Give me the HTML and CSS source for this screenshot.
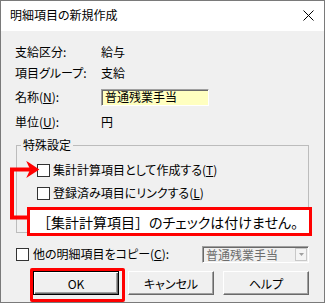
FILE: index.html
```html
<!DOCTYPE html>
<html lang="ja">
<head>
  <meta charset="UTF-8">
  <title>明細項目の新規作成</title>
  <link rel="stylesheet" href="styles.css">
</head>
<body>
  <div class="window">
    <div class="titlebar">
      <span class="title">明細項目の新規作成</span>
      <svg class="close" width="11" height="11" viewBox="0 0 11 11">
        <path d="M0.5 0.5 L10.5 10.5 M10.5 0.5 L0.5 10.5" stroke="#000" stroke-width="1" fill="none"/>
      </svg>
    </div>

    <div class="content">
      <!-- info rows -->
      <div class="info">
        <span>支給区分:</span><span>給与</span>
        <span>項目グループ:</span><span>支給</span>
        <span>名称(<u>N</u>):</span><span class="field">普通残業手当</span>
        <span>単位(<u>U</u>):</span><span>円</span>
      </div>

      <fieldset class="group">
        <legend>特殊設定</legend>
        <label class="check"><span class="box"></span>集計計算項目として作成する(<u>T</u>)</label>
        <label class="check"><span class="box"></span>登録済み項目にリンクする(<u>L</u>)</label>
      </fieldset>

      <div class="copy-row">
        <label class="check"><span class="box"></span>他の明細項目をコピー(<u>C</u>):</label>
        <div class="select">
          <span>普通残業手当</span>
          <span class="select-btn">
            <svg width="5" height="3" viewBox="0 0 5 3"><path d="M0 0 H5 L2.5 3 Z" fill="#a0a0a0"/></svg>
          </span>
        </div>
      </div>

      <div class="buttons">
        <button class="btn default">OK</button>
        <button class="btn">キャンセル</button>
        <button class="btn">ヘルプ</button>
      </div>
    </div>

    <!-- annotations -->
    <svg class="arrow" width="45" height="80" viewBox="0 150 45 80">
      <path d="M31 169.5 H12 V217.5 H28" stroke="#f00" stroke-width="4" fill="none"/>
      <path d="M28 163 L38 169.5 L28 176 L31 169.5 Z" fill="#f00" stroke="#f00" stroke-width="1.5" stroke-linejoin="miter"/>
    </svg>
    <div class="note"><span class="fw">［</span>集計計算項目<span class="fw">］</span>のチェックは付けません。</div>
    <div class="highlight"></div>
  </div>
</body>
</html>
```

FILE: styles.css
```css
body {
  margin: 0;
  font-family: "Noto Sans CJK JP", sans-serif;
  font-size: 12px;
  font-feature-settings: "palt";
  color: #000;
}

.window {
  width: 325px;
  height: 303px;
  box-sizing: border-box;
  border: 1px solid #7a7a7a;
  background: #f0f0f0;
  position: relative;
  overflow: hidden;
}

.titlebar {
  height: 30px;
  background: #fff;
  display: flex;
  align-items: center;
  justify-content: space-between;
  padding: 0 10px 0 9px;
}

.title {
  font-size: 12px;
  line-height: 16px;
  margin-top: -2px;
}

.close {
  display: block;
  margin-top: -2px;
}

.content {
  padding: 10px 0 0 15px;
}

.info {
  display: grid;
  grid-template-columns: 86px auto;
  grid-template-rows: 21px 22px 26px 24px;
  align-items: center;
  margin-left: -1px;
  line-height: 16px;
}

.field {
  width: 108px;
  height: 17px;
  box-sizing: border-box;
  background: #ffffc0;
  border: 1px solid;
  border-color: #a0a0a0 #fff #fff #a0a0a0;
  box-shadow: inset 1px 1px #696969;
  padding-left: 3px;
  line-height: 14px;
  font-size: 12px;
}

.group {
  width: 293px;
  box-sizing: border-box;
  margin: 3px 0 0 0;
  padding: 0 0 29px 4px;
  border: 1px solid #bcbcbc;
}

.group legend {
  padding: 0 2px;
  line-height: 16px;
}

.check {
  display: flex;
  align-items: center;
  height: 20px;
  line-height: 16px;
}

.group .check {
  margin-left: 16px;
}

.group .check:first-of-type {
  margin-top: 7px;
}

.group .check + .check {
  margin-top: 3px;
}

.box {
  width: 13px;
  height: 13px;
  box-sizing: border-box;
  border: 1px solid #333;
  background: #fff;
  margin-right: 3px;
}

.copy-row {
  width: 293px;
  height: 18px;
  margin-top: 12px;
  display: flex;
  align-items: center;
  justify-content: space-between;
}

.copy-row .box {
  margin-right: 4px;
}

.select {
  width: 107px;
  height: 17px;
  box-sizing: border-box;
  border: 1px solid;
  border-color: #a0a0a0 #fff #fff #a0a0a0;
  box-shadow: inset 1px 1px #696969;
  display: flex;
  align-items: center;
  justify-content: space-between;
  padding-left: 3px;
  color: #6d6d6d;
  line-height: 14px;
  margin-top: 1px;
}

.select-btn {
  width: 12px;
  height: 13px;
  box-sizing: border-box;
  border: 1px solid #c8c8c8;
  background: #f4f4f4;
  display: flex;
  align-items: center;
  justify-content: center;
  margin-right: 1px;
}

.buttons {
  display: flex;
  gap: 9px;
  margin-top: 8px;
  padding-left: 17px;
}

.btn {
  width: 86px;
  height: 24px;
  box-sizing: border-box;
  font-family: inherit;
  font-size: 12px;
  font-feature-settings: "palt";
  background: #f0f0f0;
  border: 1px solid;
  border-color: #fff #696969 #696969 #fff;
  box-shadow: inset -1px -1px #a0a0a0;
  padding: 0;
  color: #000;
}

.btn.default {
  border: 1px solid #000;
  box-shadow: inset 1px 1px #fff, inset -1px -1px #696969, inset -2px -2px #a0a0a0;
}

.arrow {
  position: absolute;
  left: -1px;
  top: 149px;
}

.note {
  position: absolute;
  left: 26px;
  top: 206px;
  width: 285px;
  height: 29px;
  box-sizing: border-box;
  border: 3px solid #f00;
  background: #fff;
  display: flex;
  align-items: center;
  padding-left: 7px;
  font-size: 14px;
  line-height: 18px;
  white-space: nowrap;
}

.note .fw {
  font-feature-settings: normal;
}

.highlight {
  position: absolute;
  left: 29px;
  top: 267px;
  width: 95px;
  height: 34px;
  box-sizing: border-box;
  border: 3px solid #f00;
  border-radius: 2px;
}
```
